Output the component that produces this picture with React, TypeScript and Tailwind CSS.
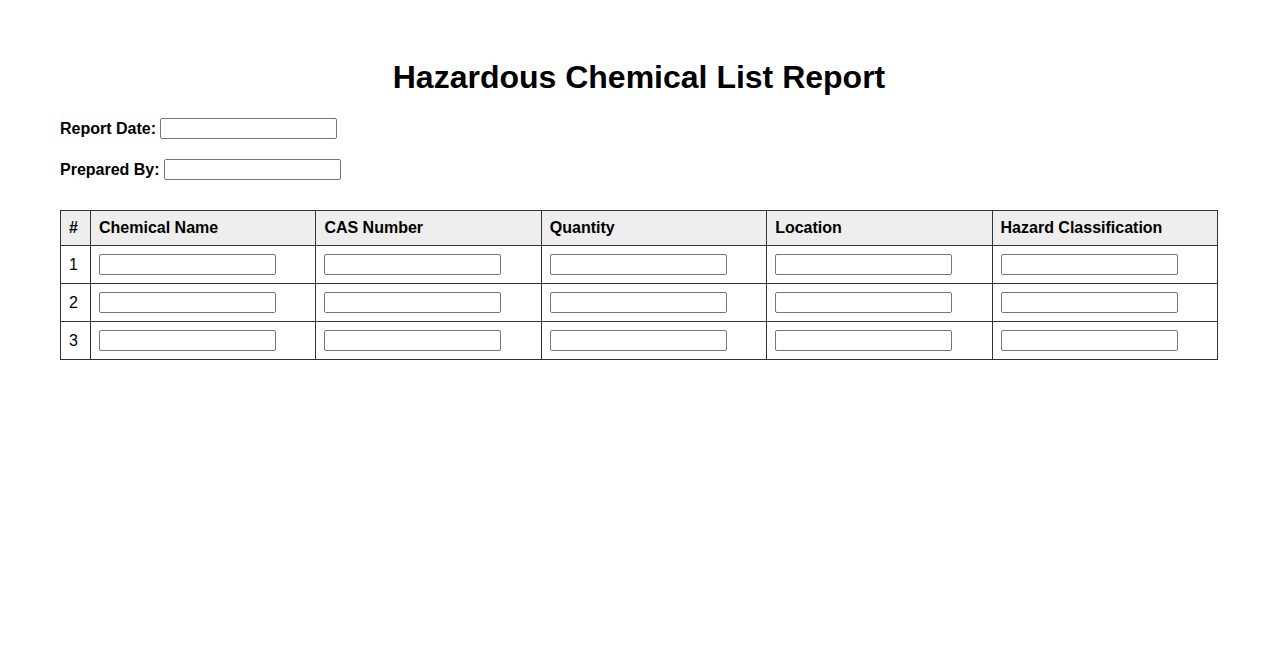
import React from 'react';

const columns = ['Chemical Name', 'CAS Number', 'Quantity', 'Location', 'Hazard Classification'];
const rows = [1, 2, 3];

function Field({ block }: { block?: boolean }) {
  return (
    <input
      type="text"
      className={`${block ? 'block' : ''} w-[177px] h-[21px] border border-[#767676] rounded-[2px] bg-white px-[2px] text-[13px]`}
    />
  );
}

export default function App() {
  return (
    <div className="min-h-[650px] bg-white px-[60px] pt-[59px] text-black text-[16px] font-['Liberation_Sans',Arial,sans-serif]">
      <h1 className="text-center text-[32px] font-bold leading-[37px] mb-[22px]">Hazardous Chemical List Report</h1>

      <div className="flex items-center gap-[4px] h-[21px] mb-[20px]">
        <label className="font-bold">Report Date:</label>
        <Field />
      </div>
      <div className="flex items-center gap-[4px] h-[21px] mb-[30px]">
        <label className="font-bold">Prepared By:</label>
        <Field />
      </div>

      <table className="w-full table-fixed border-collapse">
        <thead>
          <tr className="bg-[#eeeeee]">
            <th className="w-[30px] border border-[#333] px-[8px] h-[35px] text-left font-bold">#</th>
            {columns.map((c) => (
              <th key={c} className="border border-[#333] px-[8px] h-[35px] text-left font-bold">
                {c}
              </th>
            ))}
          </tr>
        </thead>
        <tbody>
          {rows.map((r) => (
            <tr key={r}>
              <td className="border border-[#333] px-[8px] h-[38px]">{r}</td>
              {columns.map((c) => (
                <td key={c} className="border border-[#333] px-[8px] h-[38px]">
                  <Field block />
                </td>
              ))}
            </tr>
          ))}
        </tbody>
      </table>
    </div>
  );
}
